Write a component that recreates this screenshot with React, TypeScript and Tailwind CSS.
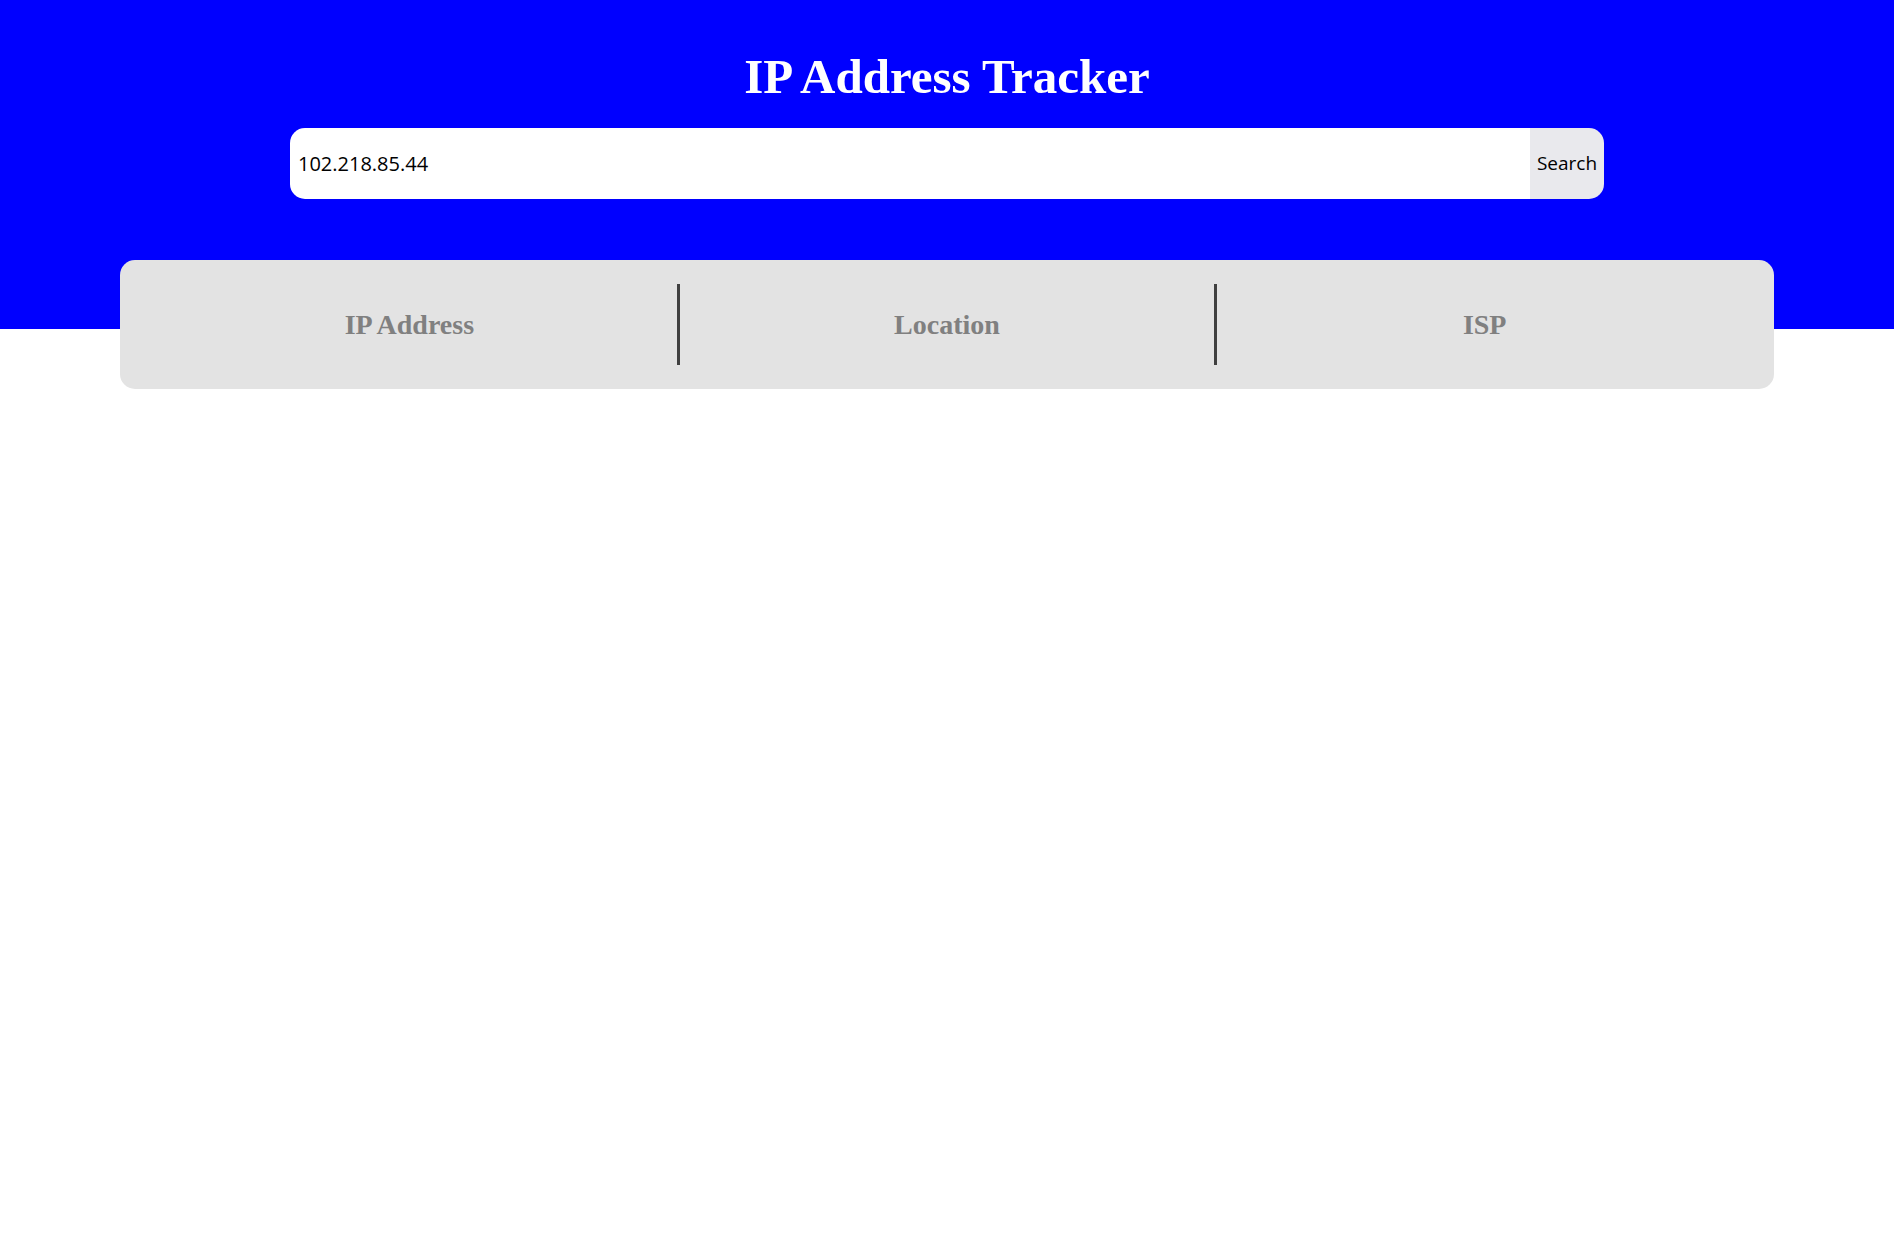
import { useState } from "react"

export default function App() {
  const [ip, setIp] = useState<string>("102.218.85.44");

  const columns = ["IP Address", "Location", "ISP"];

  return (
    <div className="min-h-screen bg-white">
      <header className="bg-[#0000ff] h-[329px] pt-[50px] flex flex-col items-center">
        <h1 className="text-white font-bold text-[49px] leading-[53px] font-['Liberation_Serif',serif]">
          IP Address Tracker
        </h1>
        <form
          className="mt-[25px] w-[1314px] h-[71px] flex rounded-[15px] overflow-hidden"
          onSubmit={(e) => e.preventDefault()}
        >
          <input
            type="text"
            className="flex-1 bg-white px-2 text-[20px] text-black outline-none font-['Open_Sans',sans-serif]"
            value={ip}
            onChange={(e) => setIp(e.target.value)}
          />
          <button
            type="submit"
            className="w-[74px] bg-[#e9e9ed] text-black text-[19px] font-['Open_Sans',sans-serif]"
          >
            Search
          </button>
        </form>
      </header>
      <div className="relative mx-[120px] -mt-[69px] bg-[#e3e3e3] rounded-[15px] px-[22px] py-[24px] flex">
        {columns.map((label, i) => (
          <div
            key={label}
            className={`flex-1 h-[81px] flex items-center justify-center ${
              i > 0 ? "border-l-[3px] border-[#404040]" : ""
            }`}
          >
            <h2 className="text-[#808080] font-bold text-[28px] font-['Liberation_Serif',serif]">
              {label}
            </h2>
          </div>
        ))}
      </div>
    </div>
  )
}
